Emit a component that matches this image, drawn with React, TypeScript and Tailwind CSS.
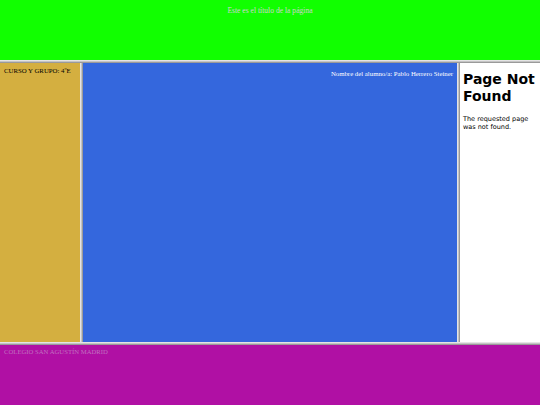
import React from "react";

const HBorder = () => (
  <div className="h-[3px] w-full shrink-0 flex flex-col">
    <div className="h-px bg-[#e4e4e4]" />
    <div className="h-px bg-[#c4c4c4]" />
    <div className="h-px bg-[#9a9a9a]" />
  </div>
);

const VBorder = () => (
  <div className="w-[3px] h-full shrink-0 flex flex-row">
    <div className="w-px bg-[#e4e4e4]" />
    <div className="w-px bg-[#c4c4c4]" />
    <div className="w-px bg-[#9a9a9a]" />
  </div>
);

export default function App() {
  const serif = { fontFamily: '"Liberation Serif", "Times New Roman", serif' };
  return (
    <div className="w-[540px] h-[405px] flex flex-col overflow-hidden" style={serif}>
      <div className="h-[60px] shrink-0 bg-[#11ff00] flex justify-center pt-[6px] text-[7.6px] leading-[9px] text-[#d0d0d0]">
        <span>Este es el título de la página</span>
      </div>
      <HBorder />
      <div className="h-[279px] flex flex-row shrink-0">
        <div className="w-[80px] h-full bg-[#d4af40] px-[4px] pt-[3px] text-[6.8px] leading-[9px] text-black whitespace-nowrap">
          CURSO Y GRUPO: 4ºE
        </div>
        <VBorder />
        <div className="w-[374px] h-full bg-[#3467dd] flex justify-end pr-[4px] pt-[6px] text-[6.8px] leading-[9px] text-white whitespace-nowrap">
          <span>Nombre del alumno/a: Pablo Herrero Steiner</span>
        </div>
        <VBorder />
        <div
          className="flex-1 h-full bg-white pl-[3px] pt-[8px]"
          style={{ fontFamily: '"DejaVu Sans", Verdana, sans-serif' }}
        >
          <h1 className="text-[14px] leading-[17px] font-bold text-black">Page Not Found</h1>
          <p className="mt-[10px] text-[6.5px] leading-[8px] text-black">The requested page was not found.</p>
        </div>
      </div>
      <HBorder />
      <div className="flex-1 bg-[#b010a4] px-[4px] pt-[2px] text-[6.7px] leading-[9px] text-[#c070c0] whitespace-nowrap">
        COLEGIO SAN AGUSTÍN MADRID
      </div>
    </div>
  );
}
